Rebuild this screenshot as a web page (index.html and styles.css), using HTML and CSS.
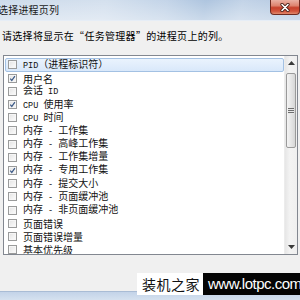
FILE: index.html
```html
<!DOCTYPE html>
<html lang="zh-CN">
<head>
<meta charset="utf-8">
<title>选择进程页列</title>
<link rel="stylesheet" href="styles.css">
</head>
<body>
<div class="window">
  <div class="titlebar">
    <span class="title">选择进程页列</span>
    <div class="close">
      <svg width="12" height="9" viewBox="0 0 12 9">
        <path d="M3 1.5 L9 7.5 M9 1.5 L3 7.5" stroke="#4a2018" stroke-width="3.2" stroke-linecap="round"/>
        <path d="M3 1.5 L9 7.5 M9 1.5 L3 7.5" stroke="#ffffff" stroke-width="1.6" stroke-linecap="round"/>
      </svg>
    </div>
  </div>
  <div class="body">
    <p class="hint">请选择将显示在“任务管理器”的进程页上的列。</p>
    <div class="listbox">
      <ul class="items">
        <li class="row selected"><span class="cb"></span><span class="lbl"><span class="lat">PID</span>（进程标识符）</span></li>
        <li class="row"><span class="cb on"><svg viewBox="0 0 9 9"><path d="M1.6 4.6 L3.6 7 L7.6 1.4" fill="none" stroke="#3c5a87" stroke-width="1.5"/></svg></span><span class="lbl">用户名</span></li>
        <li class="row"><span class="cb"></span><span class="lbl">会话<span class="lat"> ID</span></span></li>
        <li class="row"><span class="cb on"><svg viewBox="0 0 9 9"><path d="M1.6 4.6 L3.6 7 L7.6 1.4" fill="none" stroke="#3c5a87" stroke-width="1.5"/></svg></span><span class="lbl"><span class="lat">CPU </span>使用率</span></li>
        <li class="row"><span class="cb"></span><span class="lbl"><span class="lat">CPU </span>时间</span></li>
        <li class="row"><span class="cb"></span><span class="lbl">内存<span class="lat"> - </span>工作集</span></li>
        <li class="row"><span class="cb"></span><span class="lbl">内存<span class="lat"> - </span>高峰工作集</span></li>
        <li class="row"><span class="cb"></span><span class="lbl">内存<span class="lat"> - </span>工作集增量</span></li>
        <li class="row"><span class="cb on"><svg viewBox="0 0 9 9"><path d="M1.6 4.6 L3.6 7 L7.6 1.4" fill="none" stroke="#3c5a87" stroke-width="1.5"/></svg></span><span class="lbl">内存<span class="lat"> - </span>专用工作集</span></li>
        <li class="row"><span class="cb"></span><span class="lbl">内存<span class="lat"> - </span>提交大小</span></li>
        <li class="row"><span class="cb"></span><span class="lbl">内存<span class="lat"> - </span>页面缓冲池</span></li>
        <li class="row"><span class="cb"></span><span class="lbl">内存<span class="lat"> - </span>非页面缓冲池</span></li>
        <li class="row"><span class="cb"></span><span class="lbl">页面错误</span></li>
        <li class="row"><span class="cb"></span><span class="lbl">页面错误增量</span></li>
        <li class="row"><span class="cb"></span><span class="lbl">基本优先级</span></li>
      </ul>
      <div class="scrollbar">
        <div class="arrow"><svg width="7" height="4" viewBox="0 0 7 4"><polygon points="0,4 7,4 3.5,0" fill="#3a3a3a"/></svg></div>
        <div class="track">
          <div class="thumb"><span class="grip"></span></div>
        </div>
        <div class="arrow"><svg width="7" height="4" viewBox="0 0 7 4"><polygon points="0,0 7,0 3.5,4" fill="#3a3a3a"/></svg></div>
      </div>
    </div>
    <div class="spacer"></div>
  </div>
  <div class="bottomstrip"></div>
  <div class="watermark">
    <span class="wm-cn">装机之家</span>
    <span class="wm-url">www.lotpc.com</span>
  </div>
</div>
</body>
</html>
```

FILE: styles.css
```css
* { box-sizing: border-box; }
html, body {
  margin: 0;
  padding: 0;
  width: 300px;
  height: 300px;
  overflow: hidden;
}
body {
  font-family: "Noto Sans CJK SC", "Liberation Sans", sans-serif;
  color: #000;
}
.window {
  position: relative;
  width: 300px;
  height: 300px;
  display: flex;
  flex-direction: column;
  background: #f0f0f0;
  overflow: hidden;
}
.titlebar {
  height: 21px;
  flex: none;
  display: flex;
  align-items: flex-start;
  background:
    linear-gradient(to bottom, rgba(255,255,255,0.0) 0%, rgba(255,255,255,0.35) 100%),
    linear-gradient(100deg, #cddbeb 0%, #d4e0ee 35%, #c3d4e8 55%, #aec5df 68%, #c2d3e7 80%, #b3c8e1 100%);
  border-bottom: 1px solid #e6edf6;
}
.title {
  margin-left: -2px;
  margin-top: 3px;
  font-size: 10px;
  line-height: 14px;
  color: #1a1a1a;
  letter-spacing: 0.2px;
}
.close {
  margin-left: auto;
  width: 30px;
  height: 15px;
  border: 1px solid #6e2a20;
  border-top: none;
  border-radius: 0 0 4px 4px;
  background: linear-gradient(to bottom, #eab0a3 0%, #de8470 40%, #c7412c 55%, #d2553d 80%, #e08a6e 100%);
  display: flex;
  align-items: center;
  justify-content: center;
}
.close svg { display: block; }
.body {
  flex: 1;
  display: flex;
  flex-direction: column;
  padding: 0 2px 0 3px;
}
.hint {
  margin: 9px 0 0 -1px;
  font-size: 10px;
  line-height: 12px;
  letter-spacing: 0.3px;
  white-space: nowrap;
  color: #000;
}
.listbox {
  margin-top: 13px;
  height: 200px;
  flex: none;
  border: 1px solid #828790;
  background: #fff;
  display: flex;
}
.items {
  flex: 1;
  margin: 0;
  padding: 2.4px 0 0 1px;
  list-style: none;
  overflow: hidden;
}
.row {
  height: 13.2px;
  display: flex;
  align-items: center;
  padding-left: 2px;
  border: 1px solid transparent;
  border-radius: 2px;
}
.row.selected {
  background: linear-gradient(to bottom, #eaf3fd, #d9e8fa);
  border-color: #a3c1e3;
}
.cb {
  width: 9px;
  height: 9px;
  flex: none;
  border: 1px solid #9a9b9b;
  background: linear-gradient(135deg, #e2e2e2 0%, #f3f3f3 60%, #fcfcfc 100%);
  box-shadow: inset 0 0 0 1px #f6f6f6;
  display: flex;
}
.cb svg { width: 100%; height: 100%; display: block; }
.cb.on {
  background: linear-gradient(135deg, #e6e6e6 0%, #f6f6f6 100%);
}
.lbl {
  margin-left: 6px;
  font-size: 10px;
  line-height: 11px;
  white-space: nowrap;
  color: #111;
}
.lat {
  font-family: "Liberation Mono", monospace;
  font-size: 8.5px;
  white-space: pre;
}
.scrollbar {
  width: 13px;
  flex: none;
  display: flex;
  flex-direction: column;
  background: linear-gradient(to right, #e6e6e6, #f3f3f3 40%, #efefef);
  border-left: 1px solid #ececec;
}
.arrow {
  height: 14px;
  flex: none;
  display: flex;
  align-items: center;
  justify-content: center;
}
.arrow svg { display: block; }
.track {
  flex: 1;
  display: flex;
  flex-direction: column;
  padding: 3px 1px 0 1px;
}
.thumb {
  height: 75px;
  border: 1px solid #9a9a9a;
  border-radius: 2px;
  background: linear-gradient(to right, #f4f4f4, #e6e6e6 50%, #d6d6d6);
  display: flex;
  align-items: center;
  justify-content: center;
}
.grip {
  width: 6px;
  height: 6px;
  background: repeating-linear-gradient(to bottom, #6e6e6e 0, #6e6e6e 1px, #e8e8e8 1px, #e8e8e8 2px);
}
.spacer { flex: 1; }
.bottomstrip {
  height: 9px;
  flex: none;
  border-top: 1px solid #a9bcd5;
  background: linear-gradient(to bottom, #c3d3e8, #d5e1ef);
}
.watermark {
  position: absolute;
  left: 137px;
  top: 273px;
  height: 22px;
  display: flex;
}
.wm-cn {
  width: 66px;
  background: #fff;
  font-size: 14px;
  line-height: 22px;
  color: #111;
  padding-left: 5px;
  letter-spacing: 0.5px;
  white-space: nowrap;
}
.wm-url {
  width: 97px;
  background: #050505;
  color: #fff;
  font-family: "Liberation Sans", sans-serif;
  font-size: 15px;
  line-height: 22px;
  letter-spacing: -0.5px;
  padding-left: 5px;
  white-space: nowrap;
}
```
